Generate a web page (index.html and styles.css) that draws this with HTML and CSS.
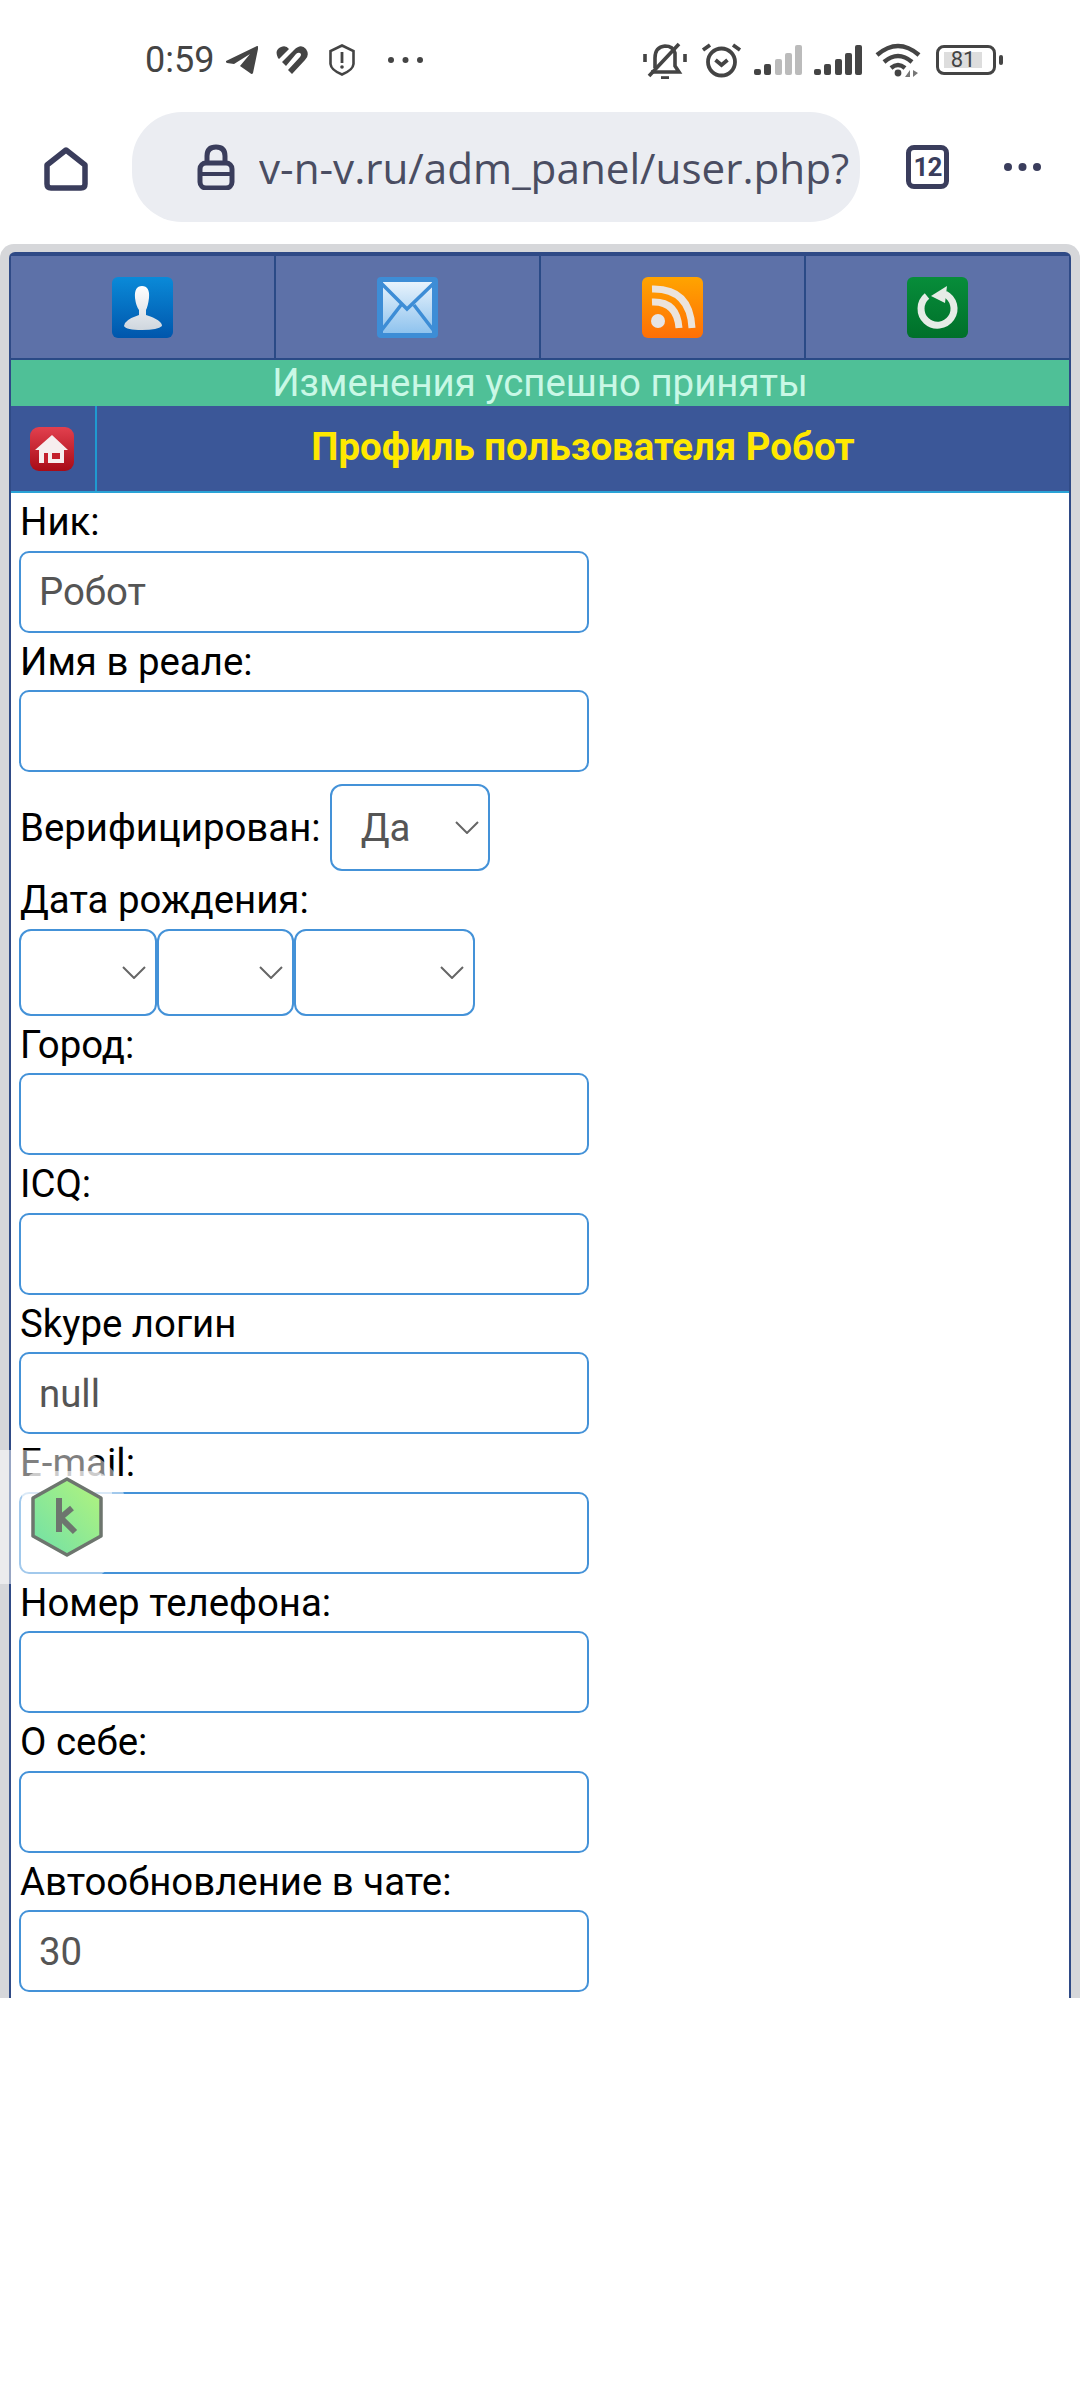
FILE: index.html
```html
<!DOCTYPE html>
<html lang="ru">

<head>
    <meta charset="UTF-8">
    <title>Профиль пользователя Робот</title>
    <link rel="stylesheet" href="styles.css">
</head>

<body>
    <!-- Status bar -->
    <div class="statusbar">
        <div class="status-left">
            <span class="clock">0:59</span>
            <svg class="st-telegram" viewBox="0 0 32 28"><path d="M0 15 L31 0 Q33 0 32 3 L27 27 Q26 29 24 27 L14 20 L24 8 L8 18 L1 17 Q-1 16 0 15Z" fill="#444"/></svg>
            <svg class="st-heart" viewBox="0 0 32 28"><path d="M2 12 Q-2 4 5 1 Q10 -1 13 3 L3 13Z M6 16 L18 4 Q25 -3 30 3 Q34 9 29 14 L16 28 L12 24 L24 11 Q26 8 24 7 Q22 6 20 8 L10 20Z" fill="#444"/></svg>
            <svg class="st-shield" viewBox="0 0 26 32"><path d="M13 1.500 L24.500 7 V20 Q24 26 13 30.500 Q2 26 1.500 20 V7Z" fill="none" stroke="#444" stroke-width="2.600"/><path d="M13 8 V19" stroke="#444" stroke-width="2.800"/><circle cx="13" cy="23" r="1.800" fill="#444"/></svg>
            <svg class="st-dots" viewBox="0 0 35 6"><circle cx="3" cy="3" r="3" fill="#444"/><circle cx="17.500" cy="3" r="3" fill="#444"/><circle cx="32" cy="3" r="3" fill="#444"/></svg>
        </div>
        <div class="status-right">
            <svg class="st-mute" viewBox="0 0 44 37" fill="none" stroke="#444" stroke-width="3.600"><path d="M12 26 V16 Q12 5 22 4 Q30 4 32 11 V24 L36 30 H8"/><path d="M6 34 L36 2"/><path d="M18 36 H26"/><path d="M2 12 V20 M42 12 V20"/></svg>
            <svg class="st-alarm" viewBox="0 0 41 36" fill="none" stroke="#444" stroke-width="3.800"><circle cx="20.500" cy="20" r="13.500"/><path d="M14.500 18 L20.500 23 L26.500 18"/><path d="M2 8 L9 3 M39 8 L32 3"/></svg>
            <svg class="st-signal" viewBox="0 0 48 30"><rect x="0" y="24" width="7" height="6" rx="2" fill="#444"/><rect x="10" y="19" width="7" height="11" rx="2" fill="#444"/><rect x="21" y="14" width="7" height="16" rx="2" fill="#bbb"/><rect x="31" y="8" width="7" height="22" rx="2" fill="#bbb"/><rect x="41" y="0" width="7" height="30" rx="2" fill="#bbb"/></svg>
            <svg class="st-signal" viewBox="0 0 48 30"><rect x="0" y="24" width="7" height="6" rx="2" fill="#444"/><rect x="10" y="19" width="7" height="11" rx="2" fill="#444"/><rect x="21" y="14" width="7" height="16" rx="2" fill="#444"/><rect x="31" y="8" width="7" height="22" rx="2" fill="#444"/><rect x="41" y="0" width="7" height="30" rx="2" fill="#444"/></svg>
            <svg class="st-wifi" viewBox="0 0 46 34" fill="none" stroke="#444" stroke-width="4.400"><path d="M2 12 Q23 -6 44 12"/><path d="M9 19 Q23 7 37 19"/><path d="M16 25 Q23 19 30 25"/><circle cx="23" cy="30" r="3.400" fill="#444" stroke="none"/><path d="M30 34 L35 27 L35 34Z M38 27 V34 L43 30Z" fill="#777" stroke="none"/></svg>
            <div class="battery">
                <div class="battery-body"><span class="battery-level">81</span></div>
                <div class="battery-nub"></div>
            </div>
        </div>
    </div>

    <!-- Browser toolbar -->
    <div class="toolbar">
        <svg class="tb-home" viewBox="0 0 44 44"><path d="M22 3 L41 18 V37 Q41 41 37 41 H7 Q3 41 3 37 V18Z" fill="none" stroke="#3a3d5c" stroke-width="5.500" stroke-linejoin="round"/></svg>
        <div class="urlbar">
            <svg class="tb-lock" viewBox="0 0 38 46"><path d="M10 20 V12 Q10 3 19 3 Q28 3 28 12 V20" fill="none" stroke="#3a3d5c" stroke-width="5"/><rect x="3" y="19" width="32" height="25" rx="6" fill="none" stroke="#3a3d5c" stroke-width="5"/><path d="M3 30 H35" stroke="#3a3d5c" stroke-width="4"/></svg>
            <span class="url">v-n-v.ru/adm_panel/user.php?</span>
        </div>
        <div class="tabcount">12</div>
        <svg class="tb-more" viewBox="0 0 37 8"><circle cx="4" cy="4" r="4" fill="#3a3d5c"/><circle cx="18.500" cy="4" r="4" fill="#3a3d5c"/><circle cx="33" cy="4" r="4" fill="#3a3d5c"/></svg>
    </div>

    <!-- Page -->
    <div class="page">
        <div class="panel">
            <div class="tabs">
                <div class="tab">
                    <svg class="tab-icon" viewBox="0 0 61 61">
                        <defs>
                            <linearGradient id="gBlue" x1="0" y1="0" x2="0" y2="1"><stop offset="0" stop-color="#0a8ad8"/><stop offset="1" stop-color="#0056ac"/></linearGradient>
                            <linearGradient id="gGrey" x1="0" y1="0" x2="0" y2="1"><stop offset="0" stop-color="#fff"/><stop offset="1" stop-color="#cfd6de"/></linearGradient>
                        </defs>
                        <rect width="61" height="61" rx="6" fill="url(#gBlue)"/>
                        <path d="M30 9 Q38 9 37 21 Q36 29 34 33 V38 Q50 43 50 49 Q46 53 30 53 Q14 53 12 49 Q12 43 27 38 V33 Q24 29 23 21 Q22 9 30 9Z" fill="url(#gGrey)"/>
                    </svg>
                </div>
                <div class="tab">
                    <svg class="tab-icon" viewBox="0 0 61 61">
                        <defs><linearGradient id="gMail" x1="0" y1="0" x2="0" y2="1"><stop offset="0" stop-color="#e8f3fc"/><stop offset="1" stop-color="#8fc3ee"/></linearGradient></defs>
                        <rect width="61" height="61" rx="4" fill="#3d8dd6"/>
                        <path d="M6 5 H55 V56 H6Z" fill="url(#gMail)"/>
                        <path d="M4 6 L30 32 L57 6 M4 54 L24 28 M57 54 L37 28" fill="none" stroke="#3d8dd6" stroke-width="3.500"/>
                    </svg>
                </div>
                <div class="tab">
                    <svg class="tab-icon" viewBox="0 0 61 61">
                        <defs><linearGradient id="gRss" x1="0" y1="0" x2="0" y2="1"><stop offset="0" stop-color="#ffa400"/><stop offset="1" stop-color="#ff6f06"/></linearGradient></defs>
                        <rect width="61" height="61" rx="6" fill="url(#gRss)"/>
                        <circle cx="16" cy="44" r="7" fill="#e6e4e4"/>
                        <path d="M10 25 Q35 24 37 51 M10 12 Q48 11 50 51" fill="none" stroke="#ebe3dc" stroke-width="7"/>
                    </svg>
                </div>
                <div class="tab">
                    <svg class="tab-icon" viewBox="0 0 61 61">
                        <defs><linearGradient id="gRefresh" x1="0" y1="0" x2="0" y2="1"><stop offset="0" stop-color="#078d3a"/><stop offset="1" stop-color="#00702a"/></linearGradient></defs>
                        <rect width="61" height="61" rx="6" fill="url(#gRefresh)"/>
                        <path d="M38 17 A16.500 16.500 0 1 1 20 19" fill="none" stroke="#e6ece6" stroke-width="7"/>
                        <path d="M24 19 L40 9 L38 26Z" fill="#e6ece6"/>
                    </svg>
                </div>
            </div>
            <div class="notice">Изменения успешно приняты</div>
            <div class="head">
                <div class="head-home">
                    <svg class="home-icon" viewBox="0 0 44 44">
                        <defs><linearGradient id="gRed" x1="0" y1="0" x2="0" y2="1"><stop offset="0" stop-color="#e2404e"/><stop offset="1" stop-color="#a80b16"/></linearGradient></defs>
                        <rect width="44" height="44" rx="9" fill="url(#gRed)"/>
                        <path d="M22 8 L38 23 H34 V36 H9 V23 H5Z" fill="#f6eeee"/>
                        <rect x="14" y="26" width="4" height="10" fill="#c4202c"/>
                        <rect x="22" y="26" width="8" height="6" fill="#c4202c"/>
                    </svg>
                </div>
                <h1 class="head-title">Профиль пользователя Робот</h1>
            </div>

            <form class="form">
                <label class="lbl">Ник:</label>
                <input class="field" type="text" value="Робот">
                <label class="lbl">Имя в реале:</label>
                <input class="field" type="text">
                <div class="verify-row">
                    <label class="lbl-inline">Верифицирован:</label>
                    <select class="sel sel-verify"><option>Да</option></select>
                </div>
                <label class="lbl">Дата рождения:</label>
                <div class="date-row">
                    <select class="sel sel-day"><option></option></select>
                    <select class="sel sel-month"><option></option></select>
                    <select class="sel sel-year"><option></option></select>
                </div>
                <label class="lbl">Город:</label>
                <input class="field" type="text">
                <label class="lbl">ICQ:</label>
                <input class="field" type="text">
                <label class="lbl">Skype логин</label>
                <input class="field" type="text" value="null">
                <label class="lbl">E-mail:</label>
                <input class="field" type="text">
                <label class="lbl">Номер телефона:</label>
                <input class="field" type="text">
                <label class="lbl">О себе:</label>
                <input class="field" type="text">
                <label class="lbl">Автообновление в чате:</label>
                <input class="field" type="text" value="30">
            </form>
        </div>
    </div>

    <!-- Floating Kaspersky bubble -->
    <div class="bubble">
        <div class="bubble-inner">
            <svg class="bubble-logo" viewBox="0 0 72 80">
                <defs><linearGradient id="gKas" x1="0" y1="1" x2="1" y2="0"><stop offset="0" stop-color="#6fe0a8"/><stop offset="1" stop-color="#b4f47c"/></linearGradient></defs>
                <path d="M36 2 L70 21 V59 L36 78 L2 59 V21Z" fill="url(#gKas)" stroke="#6d756e" stroke-width="3.500" stroke-linejoin="round"/>
                <path d="M28 21 V55 M28 42 L41 31 M30 41 L44 55" fill="none" stroke="#6d756e" stroke-width="6"/>
            </svg>
        </div>
    </div>
</body>

</html>
```

FILE: styles.css
```css
/* Basic Styles */
body {
    margin: 0;
    padding: 0;
    background-color: #fff;
    font-family: Roboto, sans-serif;
    color: #000;
    position: relative;
}

/* Status bar */
.statusbar {
    height: 112px;
    padding: 0 77px 0 145px;
    display: flex;
    justify-content: space-between;
    align-items: flex-start;
    box-sizing: border-box;
    color: #444;
}

.status-left,
.status-right {
    height: 120px;
    display: flex;
    align-items: center;
}

.clock {
    font-size: 36px;
    width: 70px;
}

.statusbar svg {
    display: block;
    flex: none;
}

.st-telegram {
    width: 32px;
    height: 28px;
    margin-left: 11px;
}

.st-heart {
    width: 32px;
    height: 28px;
    margin-left: 18px;
}

.st-shield {
    width: 26px;
    height: 32px;
    margin-left: 21px;
}

.st-dots {
    width: 35px;
    height: 6px;
    margin-left: 33px;
}

.st-mute {
    width: 44px;
    height: 37px;
}

.st-alarm {
    width: 41px;
    height: 36px;
    margin-left: 14px;
}

.st-signal {
    width: 48px;
    height: 30px;
    margin-left: 12px;
}

.st-wifi {
    width: 46px;
    height: 34px;
    margin-left: 13px;
}

.battery {
    margin-left: 15px;
    display: flex;
    align-items: center;
    gap: 3px;
}

.battery-body {
    width: 60px;
    height: 30px;
    box-sizing: border-box;
    border: 3px solid #444;
    border-radius: 8px;
    padding: 4px 5px;
}

.battery-level {
    display: block;
    width: 38px;
    height: 16px;
    background-color: #ddd;
    font-size: 22px;
    line-height: 16px;
    text-align: center;
    color: #444;
}

.battery-nub {
    width: 4px;
    height: 10px;
    background-color: #444;
    border-radius: 2px;
}

/* Browser toolbar */
.toolbar {
    height: 132px;
    display: flex;
    align-items: flex-start;
    position: relative;
}

.tb-home {
    width: 44px;
    height: 44px;
    margin: 35px 0 0 44px;
    flex: none;
}

.urlbar {
    width: 728px;
    height: 110px;
    margin-left: 44px;
    padding-left: 65px;
    box-sizing: border-box;
    background-color: #ebedf2;
    border-radius: 50px;
    display: flex;
    align-items: center;
    overflow: hidden;
    flex: none;
}

.tb-lock {
    width: 38px;
    height: 46px;
    flex: none;
}

.url {
    margin-left: 24px;
    width: 593px;
    overflow: hidden;
    white-space: nowrap;
    flex: none;
    font-family: "Open Sans", sans-serif;
    font-size: 42.2px;
    color: #4a4d62;
}

.tabcount {
    width: 43px;
    height: 44px;
    margin: 33px 0 0 46px;
    box-sizing: border-box;
    border: 5px solid #3a3d5c;
    border-radius: 8px;
    font-size: 26px;
    font-weight: 700;
    letter-spacing: -1px;
    line-height: 34px;
    text-align: center;
    color: #3a3d5c;
    flex: none;
}

.tb-more {
    width: 37px;
    height: 8px;
    margin: 51px 0 0 55px;
    flex: none;
}

/* Page */
.page {
    height: 1754px;
    box-sizing: border-box;
    padding: 8px 9px 0;
    background-color: #d6d7da;
    border-radius: 14px 14px 0 0;
    overflow: hidden;
}

.panel {
    height: 100%;
    box-sizing: border-box;
    border: 2px solid #2f4a86;
    border-top-width: 4px;
    border-bottom: none;
    border-radius: 6px 6px 0 0;
    background-color: #fff;
}

.tabs {
    display: grid;
    grid-template-columns: repeat(4, 1fr);
    gap: 2px;
    background-color: #2a4a86;
    padding-bottom: 2px;
}

.tab {
    height: 102px;
    background-color: #5d71a8;
    display: flex;
    align-items: center;
    justify-content: center;
}

.tab-icon {
    width: 61px;
    height: 61px;
}

.notice {
    height: 46px;
    background-color: #4fc097;
    color: #c9f8e6;
    font-size: 38.4px;
    line-height: 46px;
    text-align: center;
}

.head {
    display: flex;
    height: 87px;
    box-sizing: border-box;
    background-color: #3b5798;
    border-bottom: 2px solid #2aa3d6;
}

.head-home {
    width: 82px;
    border-right: 2px solid #1f9ad0;
    display: flex;
    align-items: center;
    justify-content: center;
    padding-right: 2px;
    box-sizing: content-box;
}

.home-icon {
    width: 44px;
    height: 44px;
}

.head-title {
    flex: 1;
    margin: 0;
    color: #ffe800;
    font-size: 38.4px;
    font-weight: 700;
    line-height: 82px;
    text-align: center;
}

/* Form */
.form {
    padding-left: 8px;
}

.lbl {
    display: block;
    height: 57.5px;
    font-size: 38.4px;
    line-height: 57.5px;
    padding-left: 1px;
}

.lbl-inline {
    font-size: 38.4px;
    padding-left: 1px;
}

.field {
    display: block;
    width: 570px;
    height: 82px;
    box-sizing: border-box;
    margin: 0;
    padding: 0 18px;
    border: 2px solid #4492d8;
    border-radius: 10px;
    outline: none;
    background-color: #fff;
    font-family: Roboto, sans-serif;
    font-size: 38.4px;
    color: #555;
}

.sel {
    display: block;
    margin: 0;
    height: 87px;
    box-sizing: border-box;
    padding: 0 0 0 29px;
    border: 2px solid #4492d8;
    border-radius: 12px;
    outline: none;
    appearance: none;
    background-color: #fff;
    background-image: url("data:image/svg+xml,%3Csvg xmlns='http://www.w3.org/2000/svg' viewBox='0 0 24 13'%3E%3Cpath d='M1 1 L12 12 L23 1' fill='none' stroke='%23666' stroke-width='2'/%3E%3C/svg%3E");
    background-repeat: no-repeat;
    background-size: 24px 13px;
    background-position: right 9px center;
    font-family: Roboto, sans-serif;
    font-size: 38.4px;
    color: #555;
}

.verify-row {
    display: flex;
    align-items: center;
    gap: 9px;
    margin-top: 12px;
}

.sel-verify {
    width: 160px;
}

.date-row {
    display: flex;
}

.sel-day {
    width: 138px;
}

.sel-month {
    width: 137px;
}

.sel-year {
    width: 181px;
}

/* Floating bubble over the page */
.bubble {
    position: absolute;
    left: 0;
    top: 1450px;
    width: 125px;
    height: 134px;
    background-color: rgba(255, 255, 255, 0.5);
    border-radius: 0 55px 55px 0;
    display: flex;
    align-items: center;
}

.bubble-inner {
    margin-left: 22px;
    width: 90px;
    height: 92px;
    background-color: rgba(255, 255, 255, 0.6);
    border-radius: 20px;
    display: flex;
    align-items: center;
    justify-content: center;
}

.bubble-logo {
    width: 72px;
    height: 80px;
}
```
